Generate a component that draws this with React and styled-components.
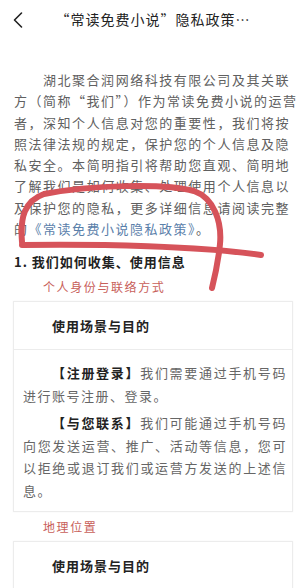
import React from "react";
import styled, { createGlobalStyle } from "styled-components";

const GlobalStyle = createGlobalStyle`
  html, body {
    margin: 0;
    padding: 0;
    background: #fff;
  }
  body {
    font-family: "Noto Sans CJK SC", "Noto Sans", sans-serif;
    -webkit-font-smoothing: antialiased;
  }
  * {
    box-sizing: border-box;
  }
`;

const introLines = [
  "湖北聚合润网络科技有限公司及其关联",
  "方（简称“我们”）作为常读免费小说的运营",
  "者，深知个人信息对您的重要性，我们将按",
  "照法律法规的规定，保护您的个人信息及隐",
  "私安全。本简明指引将帮助您直观、简明地",
  "了解我们是如何收集、处理使用个人信息以",
  "及保护您的隐私，更多详细信息请阅读完整",
];

const sections = [
  {
    title: "个人身份与联络方式",
    items: [
      {
        tag: "【注册登录】",
        text: "我们需要通过手机号码进行账号注册、登录。",
      },
      {
        tag: "【与您联系】",
        text: "我们可能通过手机号码向您发送运营、推广、活动等信息，您可以拒绝或退订我们或运营方发送的上述信息。",
      },
    ],
  },
  {
    title: "地理位置",
    items: [],
  },
];

const BackIcon = () => (
  <svg width="12" height="18" viewBox="0 0 12 18" fill="none">
    <path
      d="M9.5 2 L2.5 9 L9.5 16"
      stroke="#222"
      strokeWidth="1.6"
      strokeLinecap="round"
      strokeLinejoin="round"
    />
  </svg>
);

const App = () => {
  return (
    <Page>
      <GlobalStyle />
      <Header>
        <BackButton>
          <BackIcon />
        </BackButton>
        <Title>“常读免费小说”隐私政策…</Title>
        <span />
      </Header>

      <Intro>
        {introLines.map((line, i) => (
          <IntroLine key={i} indent={i === 0}>
            {line}
          </IntroLine>
        ))}
        <IntroLast>
          的<PolicyLink>《常读免费小说隐私政策》</PolicyLink>。
        </IntroLast>
      </Intro>

      <Content>
        <SectionTitle>1. 我们如何收集、使用信息</SectionTitle>
        {sections.map((section) => (
          <React.Fragment key={section.title}>
            <SubTitle>{section.title}</SubTitle>
            <Card>
              <CardHead>使用场景与目的</CardHead>
              {section.items.length > 0 && (
                <CardBody>
                  {section.items.map((item) => (
                    <Para key={item.tag}>
                      <Tag>{item.tag}</Tag>
                      {item.text}
                    </Para>
                  ))}
                </CardBody>
              )}
            </Card>
          </React.Fragment>
        ))}
      </Content>

      {/* hand drawn marker over the screenshot */}
      <Marker width="300" height="588" viewBox="0 0 300 588">
        <path
          d="M22 242 C20 218 24 201 44 194 C90 185 165 183 194 191 C214 198 222 222 220 244 C218 264 215 276 212 288"
          stroke="#d6535a"
          strokeWidth="6"
          fill="none"
          strokeLinecap="round"
        />
        <path
          d="M22 245 C100 244 200 246 261 255"
          stroke="#d6535a"
          strokeWidth="6"
          fill="none"
          strokeLinecap="round"
        />
      </Marker>
    </Page>
  );
};

export default App;

const Page = styled.div`
  position: relative;
  width: 300px;
  min-height: 588px;
  overflow: hidden;
  background: #fff;
`;

const Header = styled.header`
  height: 38px;
  display: grid;
  grid-template-columns: 40px 1fr 40px;
  align-items: center;
`;

const BackButton = styled.div`
  display: flex;
  align-items: center;
  padding-left: 12px;
  padding-top: 1px;
`;

const Title = styled.h1`
  margin: 0;
  text-align: center;
  font-size: 14px;
  font-weight: 400;
  letter-spacing: 1px;
  color: #222;
  white-space: nowrap;
  padding-left: 6px;
`;

const Intro = styled.div`
  margin-top: 31px;
  padding: 0 10px 0 14px;
  font-size: 13px;
  line-height: 21.3px;
  color: #606060;
  letter-spacing: 1.5px;
`;

const IntroLine = styled.div`
  text-align: justify;
  text-align-last: justify;
  padding-left: ${(p) => (p.indent ? "29px" : "0")};
  white-space: nowrap;
`;

const IntroLast = styled.div`
  white-space: nowrap;
`;

const PolicyLink = styled.span`
  color: #5a80aa;
`;

const Content = styled.div`
  padding: 0 7px 0 13px;
`;

const SectionTitle = styled.h2`
  margin: 13px 0 0 1px;
  font-size: 13px;
  line-height: 20px;
  font-weight: 700;
  letter-spacing: 1px;
  color: #222;
`;

const SubTitle = styled.div`
  margin: 5px 0 4px 30px;
  font-size: 12px;
  line-height: 20px;
  letter-spacing: 1.6px;
  color: #c8605a;
`;

const Card = styled.div`
  border: 1px solid #ececec;
  box-shadow: 0 0 2px rgba(0, 0, 0, 0.04);
  background: #fff;
  margin-bottom: 5px;
`;

const CardHead = styled.div`
  height: 47px;
  display: flex;
  align-items: center;
  padding-left: 38px;
  font-size: 13px;
  font-weight: 700;
  letter-spacing: 1px;
  color: #222;
`;

const CardBody = styled.div`
  border-top: 1px solid #ececec;
  padding: 12px 5px 9px 9px;
  display: flex;
  flex-direction: column;
  gap: 5px;
`;

const Para = styled.p`
  margin: 0;
  text-indent: 29px;
  font-size: 13px;
  line-height: 22.5px;
  letter-spacing: 1.5px;
  color: #666;
  text-align: justify;
`;

const Tag = styled.span`
  font-weight: 700;
  color: #222;
`;

const Marker = styled.svg`
  position: absolute;
  left: 0;
  top: 0;
  pointer-events: none;
`;
